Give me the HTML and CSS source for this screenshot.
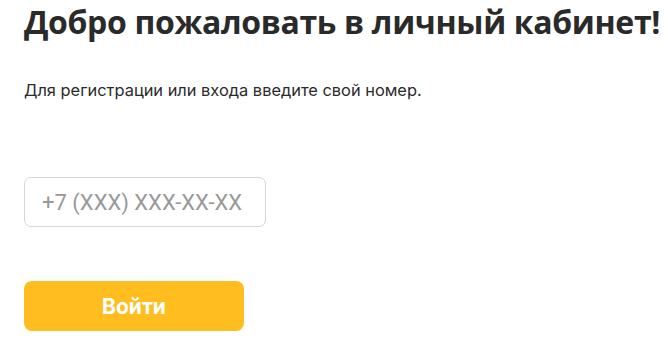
FILE: index.html
```html
<!DOCTYPE html>
<html lang="ru">
<head>
  <meta charset="UTF-8" />
  <meta name="viewport" content="width=device-width, initial-scale=1.0"/>
  <title>Личный кабинет</title>
  <link rel="stylesheet" href="styles.css">
</head>
<body>
  <div class="container">
    <h1>Добро пожаловать в личный кабинет!</h1>
    <p class="hint">Для регистрации или входа введите свой номер.</p>

    <form class="login-form" onsubmit="return false">
      <input type="tel" class="phone" placeholder="+7 (XXX) XXX-XX-XX">
      <button type="submit" class="btn-login">Войти</button>
    </form>
  </div>
</body>
</html>
```

FILE: styles.css
```css
body {
  margin: 0;
  padding: 0 24px;
  background: #fff;
  font-family: Inter, Roboto, "Liberation Sans", sans-serif;
  color: #2a2a2a;
}

.container {
  display: flex;
  flex-direction: column;
}

h1 {
  margin: 4px 0 0;
  font-family: "Open Sans", Roboto, sans-serif;
  font-size: 32px;
  font-weight: 700;
  line-height: 36px;
  letter-spacing: -0.35px;
  white-space: nowrap;
}

.hint {
  margin: 40px 0 0;
  font-size: 16.4px;
  line-height: 20px;
  color: #2a2a2a;
}

.login-form {
  display: flex;
  flex-direction: column;
  align-items: flex-start;
  gap: 54px;
  margin-top: 77px;
}

.phone {
  box-sizing: border-box;
  width: 242px;
  height: 50px;
  padding: 0 17px;
  border: 1px solid #d6d6d6;
  border-radius: 7px;
  font-family: Roboto, "Liberation Sans", sans-serif;
  font-size: 22px;
  color: #333;
}

.phone::placeholder {
  color: #999;
}

.phone:focus {
  outline: none;
  border-color: #ffbd20;
}

.btn-login {
  width: 220px;
  height: 50px;
  border: none;
  border-radius: 8px;
  background: #ffbd20;
  color: #fff;
  font-family: Inter, "Open Sans", sans-serif;
  font-size: 21px;
  font-weight: 700;
  cursor: pointer;
}
```
